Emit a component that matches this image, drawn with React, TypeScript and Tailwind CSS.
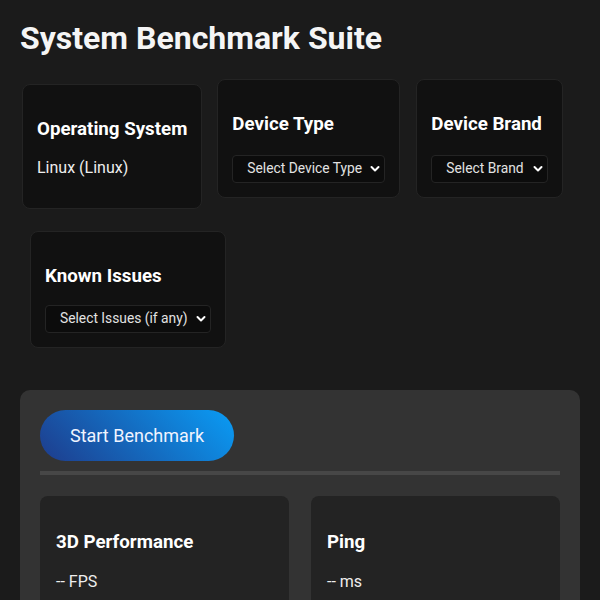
import React from "react";

function Chevron() {
  return (
    <svg
      className="pointer-events-none absolute right-[5px] top-1/2 -translate-y-1/2"
      width="10"
      height="8"
      viewBox="0 0 10 8"
      fill="none"
    >
      <path d="M1.5 2 L5 5.5 L8.5 2" stroke="#ffffff" strokeWidth="2" strokeLinecap="round" strokeLinejoin="round" />
    </svg>
  );
}

function Sel({ label, w }: { label: string; w: string }) {
  return (
    <div className={`relative ${w}`}>
      <select className="block h-[28px] w-full appearance-none rounded-[4px] border border-[#242424] bg-[#0c0c0c] pl-[14px] pr-[16px] text-[13.8px] text-[#e2e2e2] outline-none">
        <option>{label}</option>
      </select>
      <Chevron />
    </div>
  );
}

export default function App() {
  const font = { fontFamily: "Roboto, 'Liberation Sans', sans-serif" };
  return (
    <div className="min-h-[600px] bg-[#1b1b1b] p-[20px] text-white" style={font}>
      <h1 className="m-0 mb-[21px] text-[32px] font-bold leading-[1.172] text-[#f5f5f5]">System Benchmark Suite</h1>

      <div className="flex items-start">
        <div className="ml-[2px] mt-[5px] rounded-[8px] border border-[#242424] bg-[#111111] p-[14px]">
          <h3 className="mt-[19px] mb-[18px] text-[18.72px] font-bold leading-[22px]">Operating System</h3>
          <p className="mb-[17px] text-[16px] leading-[19px] text-[#eeeeee]">Linux (Linux)</p>
        </div>
        <div className="ml-[15px] rounded-[8px] border border-[#242424] bg-[#111111] p-[14px]">
          <h3 className="mt-[19px] mb-[20px] text-[18.72px] font-bold leading-[22px]">Device Type</h3>
          <Sel label="Select Device Type" w="w-[153px]" />
        </div>
        <div className="ml-[16px] rounded-[8px] border border-[#242424] bg-[#111111] p-[14px]">
          <h3 className="mt-[19px] mb-[20px] text-[18.72px] font-bold leading-[22px]">Device Brand</h3>
          <Sel label="Select Brand" w="w-[117px]" />
        </div>
      </div>

      <div className="flex">
        <div className="ml-[10px] mt-[22px] rounded-[8px] border border-[#242424] bg-[#111111] p-[14px]">
          <h3 className="mt-[19px] mb-[18px] text-[18.72px] font-bold leading-[22px]">Known Issues</h3>
          <Sel label="Select Issues (if any)" w="w-[166px]" />
        </div>
      </div>

      <div className="mt-[42px] rounded-[10px] bg-[#333333] p-[20px]">
        <button className="h-[51px] w-[194px] rounded-full bg-[linear-gradient(45deg,#1e3c8c,#0a9cf5)] text-[18px] text-[#f0f4ff]">
          Start Benchmark
        </button>
        <div className="mt-[10px] h-[4px] w-full bg-[#474747]"></div>
        <div className="mt-[21px] grid grid-cols-2 gap-[22px]">
          <div className="rounded-[8px] bg-[#232323] p-[16px]">
            <h3 className="mt-[19px] mb-[19px] text-[18.72px] font-bold leading-[22px]">3D Performance</h3>
            <p className="mb-[16px] text-[16px] leading-[19px] text-[#eeeeee]">-- FPS</p>
          </div>
          <div className="rounded-[8px] bg-[#232323] p-[16px]">
            <h3 className="mt-[19px] mb-[19px] text-[18.72px] font-bold leading-[22px]">Ping</h3>
            <p className="mb-[16px] text-[16px] leading-[19px] text-[#eeeeee]">-- ms</p>
          </div>
        </div>
      </div>
    </div>
  );
}
